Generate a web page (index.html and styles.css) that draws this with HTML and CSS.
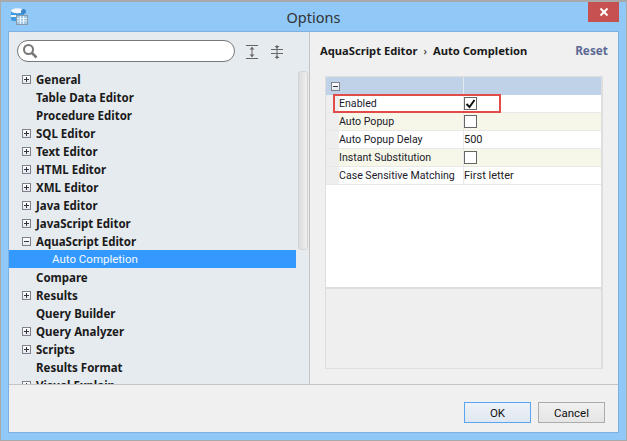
FILE: index.html
```html
<!DOCTYPE html>
<html lang="en">
<head>
<meta charset="utf-8">
<title>Options</title>
<link rel="stylesheet" href="styles.css">
</head>
<body>
<div class="window">
  <header class="titlebar">
    <svg class="app-icon" width="17" height="17" viewBox="0 0 17 17">
      <rect x="0" y="1" width="13" height="12" rx="2.500" fill="#3f9be0"/>
      <ellipse cx="6.500" cy="2.800" rx="6.500" ry="2.500" fill="#f4f8fc"/>
      <rect x="0" y="7" width="13" height="2" fill="#eef6fc"/>
      <circle cx="12.500" cy="3.500" r="2.500" fill="#3f86c8"/>
      <rect x="5.500" y="7.500" width="11" height="9" fill="#a4c8e4" stroke="#8a9aa8"/>
      <path d="M6 10.500h10M6 13h10M9.500 8v8M12.500 8v8" stroke="#e8f2fa" stroke-width="1"/>
    </svg>
    <span class="title">Options</span>
    <button class="close" aria-label="Close">
      <svg width="10" height="10" viewBox="0 0 10 10"><path d="M1.500 1.500l7 7M8.500 1.500l-7 7" stroke="#fff" stroke-width="2"/></svg>
    </button>
  </header>
  <div class="client">
    <div class="main">
      <aside class="sidebar">
        <div class="search-row">
          <div class="search">
            <svg width="16" height="16" viewBox="0 0 16 16"><circle cx="6.500" cy="6.500" r="4.500" fill="none" stroke="#777" stroke-width="2"/><path d="M10 10l4.500 4.500" stroke="#777" stroke-width="2.500"/></svg>
          </div>
          <svg class="tool" width="12" height="14" viewBox="0 0 12 14"><path d="M0 .5h12M0 13.500h12M6 2v10" stroke="#666" fill="none"/><path d="M3.500 4.500h5L6 2zM3.500 9.500h5L6 12z" fill="#666"/></svg>
          <svg class="tool tool-b" width="12" height="14" viewBox="0 0 12 14"><path d="M0 4.500h12M0 8.500h12M6 0v14" stroke="#666" fill="none"/><path d="M3.500 1h5L6 3.500zM3.500 13h5L6 10.500z" fill="#666"/></svg>
        </div>
        <div class="tree-area">
          <ul class="tree">
            <li class="node"><i class="box plus"></i>General</li>
            <li class="node"><i class="box none"></i>Table Data Editor</li>
            <li class="node"><i class="box none"></i>Procedure Editor</li>
            <li class="node"><i class="box plus"></i>SQL Editor</li>
            <li class="node"><i class="box plus"></i>Text Editor</li>
            <li class="node"><i class="box plus"></i>HTML Editor</li>
            <li class="node"><i class="box plus"></i>XML Editor</li>
            <li class="node"><i class="box plus"></i>Java Editor</li>
            <li class="node"><i class="box plus"></i>JavaScript Editor</li>
            <li class="node"><i class="box"></i>AquaScript Editor</li>
            <li class="node selected">Auto Completion</li>
            <li class="node"><i class="box none"></i>Compare</li>
            <li class="node"><i class="box plus"></i>Results</li>
            <li class="node"><i class="box none"></i>Query Builder</li>
            <li class="node"><i class="box plus"></i>Query Analyzer</li>
            <li class="node"><i class="box plus"></i>Scripts</li>
            <li class="node"><i class="box none"></i>Results Format</li>
            <li class="node"><i class="box plus"></i>Visual Explain</li>
          </ul>
          <div class="scrollbar"><div class="thumb"></div></div>
        </div>
      </aside>
      <section class="content">
        <div class="crumbs">
          <span class="path">AquaScript Editor<span class="sep">›</span>Auto Completion</span>
          <span class="reset">Reset</span>
        </div>
        <div class="props">
          <div class="grid">
            <div class="row head"><div class="name"><i class="box"></i></div><div class="value"></div></div>
            <div class="row"><div class="gutter"></div><div class="name">Enabled</div><div class="value"><span class="check on"><svg width="11" height="10" viewBox="0 0 11 10"><path d="M1.500 5l3 3 5-7" fill="none" stroke="#111" stroke-width="2"/></svg></span></div></div>
            <div class="row alt"><div class="gutter"></div><div class="name">Auto Popup</div><div class="value"><span class="check"></span></div></div>
            <div class="row"><div class="gutter"></div><div class="name">Auto Popup Delay</div><div class="value">500</div></div>
            <div class="row alt"><div class="gutter"></div><div class="name">Instant Substitution</div><div class="value"><span class="check"></span></div></div>
            <div class="row"><div class="gutter"></div><div class="name">Case Sensitive Matching</div><div class="value">First letter</div></div>
            <div class="highlight"></div>
          </div>
          <div class="details"></div>
        </div>
      </section>
    </div>
    <footer class="footer">
      <button class="btn primary">OK</button>
      <button class="btn">Cancel</button>
    </footer>
  </div>
</div>
</body>
</html>
```
FILE: styles.css
```css
* { box-sizing: border-box; }
html, body { margin: 0; height: 100%; }
body { font: 11px Roboto, "Noto Sans", sans-serif; color: #111; overflow: hidden; }
.window { width: 627px; height: 441px; background: #90c8f8; border: 1px solid #a9a9a9; border-top-width: 2px; display: flex; flex-direction: column; }
.titlebar { height: 29px; flex: none; display: flex; align-items: flex-start; position: relative; }
.app-icon { margin: 6px 0 0 10px; }
.title { position: absolute; left: 0; right: 0; top: 6px; text-align: center; font: 14.500px "Noto Sans", sans-serif; line-height: 18px; color: #333; }
.close { position: absolute; right: 7px; top: 0; width: 31px; height: 20px; border: 0; padding: 0; background: #c75050; display: flex; align-items: center; justify-content: center; }
.client { flex: 1; margin: 0 7px 7px 7px; border: 1px solid #7fb0e0; background: #f0f0f0; display: flex; flex-direction: column; min-height: 0; }
.main { flex: 1; display: flex; min-height: 0; border-bottom: 1px solid #c4c4c4; }
.sidebar { width: 301px; flex: none; background: #e6ebf0; border-right: 1px solid #c4c4c4; display: flex; flex-direction: column; }
.search-row { height: 38px; flex: none; padding: 8px 0 0 8px; display: flex; align-items: flex-start; }
.search { width: 218px; height: 22px; border: 1px solid #777; border-radius: 11px; background: #fff; padding: 2px 0 0 4px; display: flex; }
.tool { margin: 5px 0 0 11px; }
.tool-b { margin-left: 13px; }
.tree-area { flex: 1; display: flex; overflow: hidden; min-height: 0; }
.tree { list-style: none; margin: 0; padding: 0; width: 287px; flex: none; }
.node { height: 18px; line-height: 17px; padding-left: 13px; font: 700 11.500px/17px "Noto Sans", sans-serif; display: flex; align-items: center; color: #1a1a1a; white-space: nowrap; }
.node.selected { background: #3399ff; color: #f4f8ff; font: 400 11.500px/17px Roboto, sans-serif; padding-left: 43px; }
.box { width: 9px; height: 9px; flex: none; border: 1px solid #80808c; background: linear-gradient(#fff, #e4e8ee) ; margin-right: 5px; position: relative; display: block; }
.box::before { content: ""; position: absolute; left: 1px; right: 1px; top: 3px; height: 1px; background: #334; }
.box.plus::after { content: ""; position: absolute; top: 1px; bottom: 1px; left: 3px; width: 1px; background: #334; }
.box.none { visibility: hidden; }
.scrollbar { flex: none; width: 10px; margin: 1px 0 0 2px; }
.thumb { height: 179px; background: linear-gradient(90deg, #dcdcdc, #efefef); border: 1px solid #d4d4d4; border-radius: 3px; }
.content { flex: 1; min-width: 0; padding: 0 15px 0 10px; display: flex; flex-direction: column; }
.crumbs { height: 44px; flex: none; padding-top: 11px; display: flex; justify-content: space-between; font: 700 11.200px/15px "Noto Sans", sans-serif; }
.path { color: #1a1a1a; }
.sep { margin: 0 6px; font-weight: 400; }
.reset { color: #5c6a96; margin-right: -5px; font-size: 11.800px; }
.props { margin-left: 5px; display: flex; flex-direction: column; height: 293px; border: 1px solid #dedede; border-right-width: 2px; background: #fff; }
.grid { flex: 1; position: relative; border-bottom: 2px solid #dedede; }
.row { height: 18px; display: flex; border-bottom: 1px solid #e8e8e8; }
.row.head { background: #c0d2e8; border-bottom: 0; height: 18px; padding-left: 5px; align-items: center; }
.row.head .name { width: 132px; height: 100%; padding: 0; display: flex; align-items: center; }
.row.head .value { border-left: 1px solid #e4e8ee; height: 100%; }
.gutter { width: 13px; flex: none; background: #eee; }
.name { width: 124px; flex: none; line-height: 17px; color: #1a1a2a; white-space: nowrap; font-size: 10.600px; }
.value { flex: 1; border-left: 1px solid #e8e8e8; padding-top: 1px; line-height: 15px; display: flex; align-items: flex-start; color: #222; }
.alt { background: #f6f7e9; }
.check { width: 13px; height: 13px; border: 1px solid #666; background: #fff; display: flex; align-items: center; justify-content: center; margin-top: 1px; }
.highlight { position: absolute; left: 7px; top: 17px; width: 168px; height: 19px; border: 2px solid #e24c48; pointer-events: none; }
.details { height: 79px; flex: none; background: #efefef; }
.footer { height: 47px; flex: none; display: flex; justify-content: flex-end; gap: 7px; padding: 17px 13px 0 0; }
.btn { width: 67px; height: 21px; padding: 0; border: 1px solid #acacac; background: linear-gradient(#f0f0f0, #e5e5e5); font: 11.500px Roboto, "Noto Sans", sans-serif; color: #111; }
.btn.primary { border-color: #5aa5f0; background: linear-gradient(#edf2f7, #dfe7f0); }
```
